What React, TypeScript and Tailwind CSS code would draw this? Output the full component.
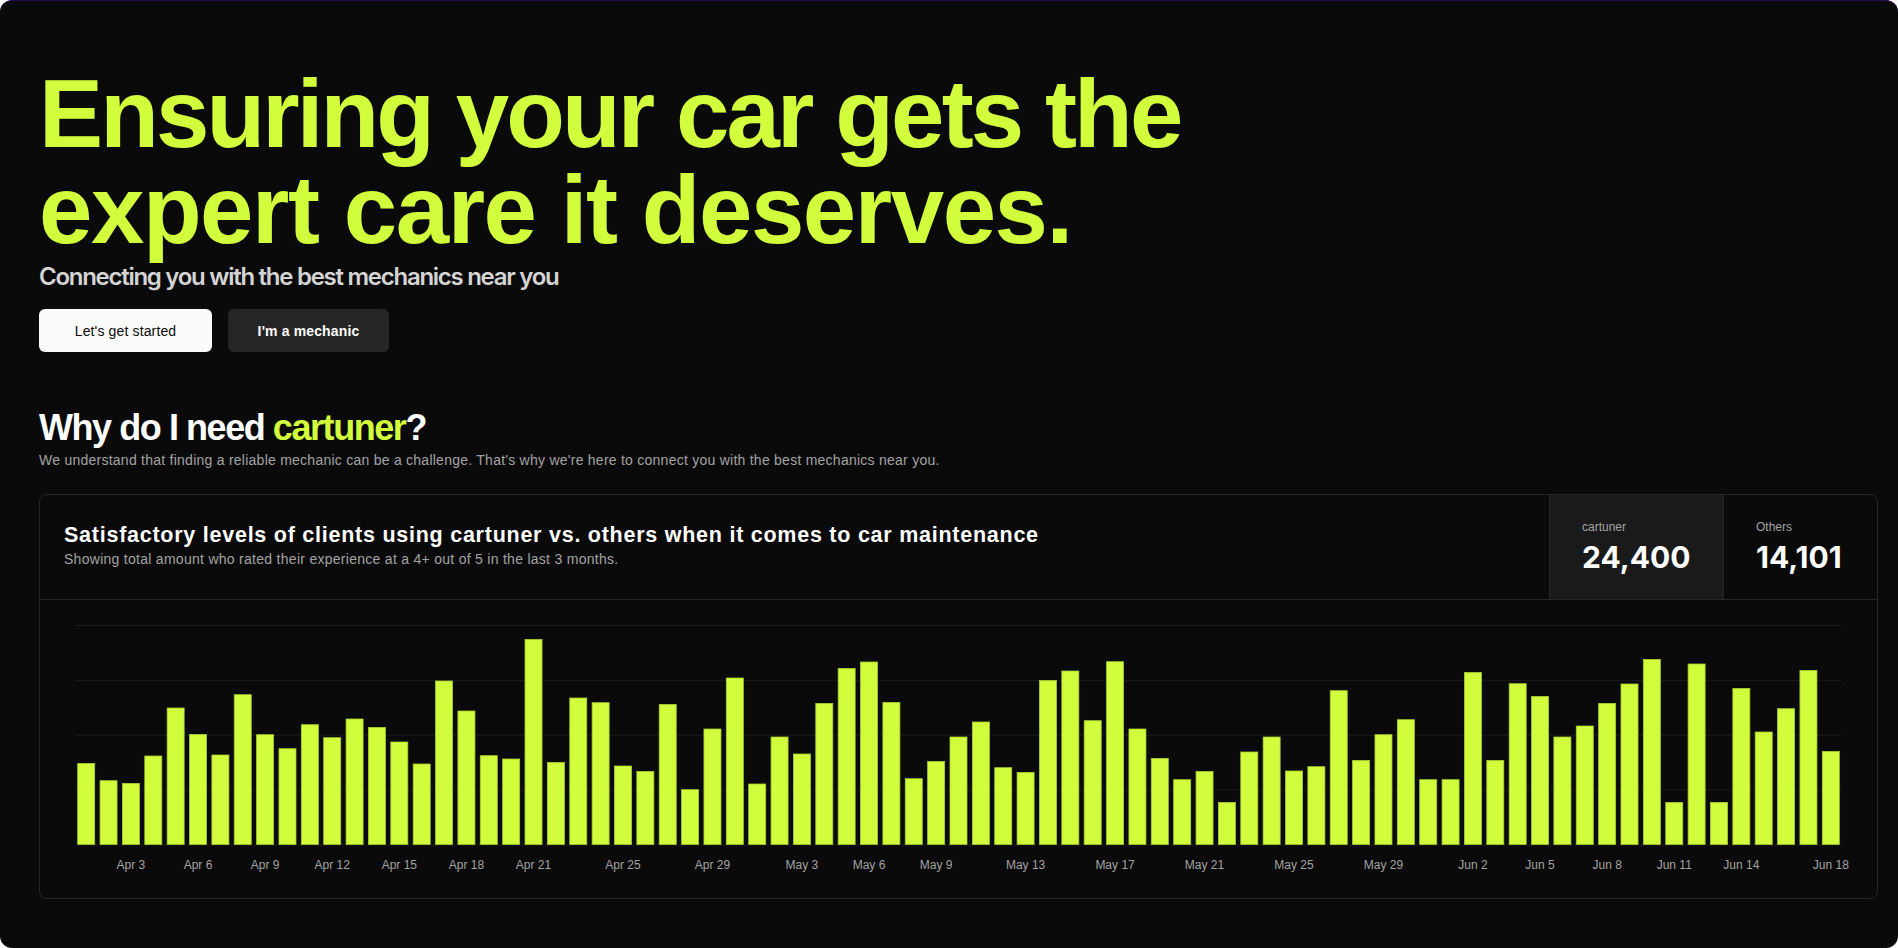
const heights = [
  81, 63.7, 61, 88.4, 136.4, 110, 89.4, 149.7, 109.7, 95.7,
  119.7, 106.7, 125.4, 117, 102.4, 80.4, 163.4, 133.4, 88.7, 85.4,
  205, 82, 146.4, 141.7, 78.4, 73, 140, 54.7, 115.4, 166.4,
  60.4, 107.4, 90.4, 141, 176, 182.4, 142, 65.7, 83, 107.4,
  122.4, 76.7, 72, 164, 173.4, 123.7, 182.7, 115.4, 86, 64.7,
  73, 42, 92.4, 107.4, 73.4, 77.7, 153.7, 84, 109.7, 124.7,
  64.7, 64.7, 172, 84, 160.7, 148, 107.4, 118.4, 141, 160.4,
  185, 42, 180.4, 42, 156, 112.4, 135.7, 174, 93,
];

// indices (from Apr 1) that get a tick label
const labelled = [2, 5, 8, 11, 14, 17, 20, 24, 28, 32, 35, 38, 42, 46, 50, 54, 58, 62, 65, 68, 71, 74, 78];

function dayLabel(i: number) {
  if (i < 30) return `Apr ${i + 1}`;
  if (i < 61) return `May ${i - 29}`;
  return `Jun ${i - 60}`;
}

const CHART_W = 1767;
const PLOT_H = 219.4;
const COL = CHART_W / heights.length;
const BAR_W = 17;

function BarChart() {
  return (
    <svg width={CHART_W} height={250} viewBox={`0 0 ${CHART_W} 250`} overflow="visible" className="block overflow-visible">
      {[0, 1, 2, 3, 4].map((k) => (
        <line
          key={k}
          x1={0}
          x2={CHART_W}
          y1={0.5 + (k * PLOT_H) / 4}
          y2={0.5 + (k * PLOT_H) / 4}
          stroke="#1c1c1c"
          strokeWidth={1}
        />
      ))}
      {heights.map((h, i) => (
        <rect
          key={i}
          x={i * COL + (COL - BAR_W) / 2}
          y={PLOT_H - h}
          width={BAR_W}
          height={h}
          fill="#d2fd3d"
          stroke="#a9cc31"
          strokeWidth={0.8}
        />
      ))}
      {labelled.map((i) => (
        <text
          key={i}
          x={i * COL + COL / 2}
          y={243.5}
          textAnchor="middle"
          fontSize={12}
          fill="#a3a3a3"
          fontFamily="'Liberation Sans', Arial, sans-serif"
        >
          {dayLabel(i)}
        </text>
      ))}
    </svg>
  );
}

export default function App() {
  return (
    <div className="min-h-screen bg-white font-['Liberation_Sans',Arial,sans-serif]">
      <div className="min-h-[948px] rounded-xl border-t border-[#25074f] bg-[#0a0a0a] pb-12 pl-[39px] pr-[20px] pt-[65px]">
        <h1 className="max-w-[1200px] text-8xl font-bold leading-none tracking-[-0.03em] text-[#d2fd3d]">
          Ensuring your car gets the
          <br />
          <span className="tracking-[-0.015em]">expert care it deserves.</span>
        </h1>
        <p className="mt-[3px] font-['Inter',sans-serif] text-2xl font-semibold leading-8 tracking-[-0.053em] text-[#d4d4d4]">
          Connecting you with the best mechanics near you
        </p>

        <div className="mt-4 flex items-center gap-4">
          <button className="h-[43px] w-[173px] rounded-md bg-[#fafafa] text-sm font-medium tracking-[0.01em] text-[#0a0a0a]">
            Let&apos;s get started
          </button>
          <button className="h-[43px] w-[161px] rounded-md bg-[#262626] text-sm font-bold tracking-[0.01em] text-white">
            I&apos;m a mechanic
          </button>
        </div>

        <h2 className="mt-14 text-4xl font-bold leading-10 tracking-[-0.04em] text-white">
          Why do I need <span className="text-[#d2fd3d]">cartuner</span>?
        </h2>
        <p className="mt-0.5 text-sm leading-5 tracking-[0.25px] text-[#a3a3a3]">
          We understand that finding a reliable mechanic can be a challenge. That&apos;s why we&apos;re here to connect you
          with the best mechanics near you.
        </p>

        <div className="mt-6 rounded-lg border border-[#262626]">
          <div className="flex border-b border-[#262626]">
            <div className="flex flex-1 flex-col justify-center px-6 pb-[4px]">
              <h3 className="text-[21.5px] font-bold leading-7 tracking-[0.75px] text-white">
                Satisfactory levels of clients using cartuner vs. others when it comes to car maintenance
              </h3>
              <p className="text-sm leading-5 tracking-[0.28px] text-[#a3a3a3]">
                Showing total amount who rated their experience at a 4+ out of 5 in the last 3 months.
              </p>
            </div>
            <div className="flex w-[174px] flex-col justify-center border-l border-[#262626] bg-[#1a1a1a] px-8 py-6">
              <span className="text-xs leading-4 text-[#a3a3a3]">cartuner</span>
              <span className="mt-1 font-['Inter',sans-serif] text-3xl font-bold leading-9 text-white">24,400</span>
            </div>
            <div className="flex w-[154px] flex-col justify-center border-l border-[#262626] px-8 py-6">
              <span className="text-xs leading-4 text-[#a3a3a3]">Others</span>
              <span className="mt-1 font-['Inter',sans-serif] text-3xl font-bold leading-9 text-white">14,101</span>
            </div>
          </div>
          <div className="px-[35px] pb-[23px] pt-[25px]">
            <BarChart />
          </div>
        </div>
      </div>
    </div>
  );
}
